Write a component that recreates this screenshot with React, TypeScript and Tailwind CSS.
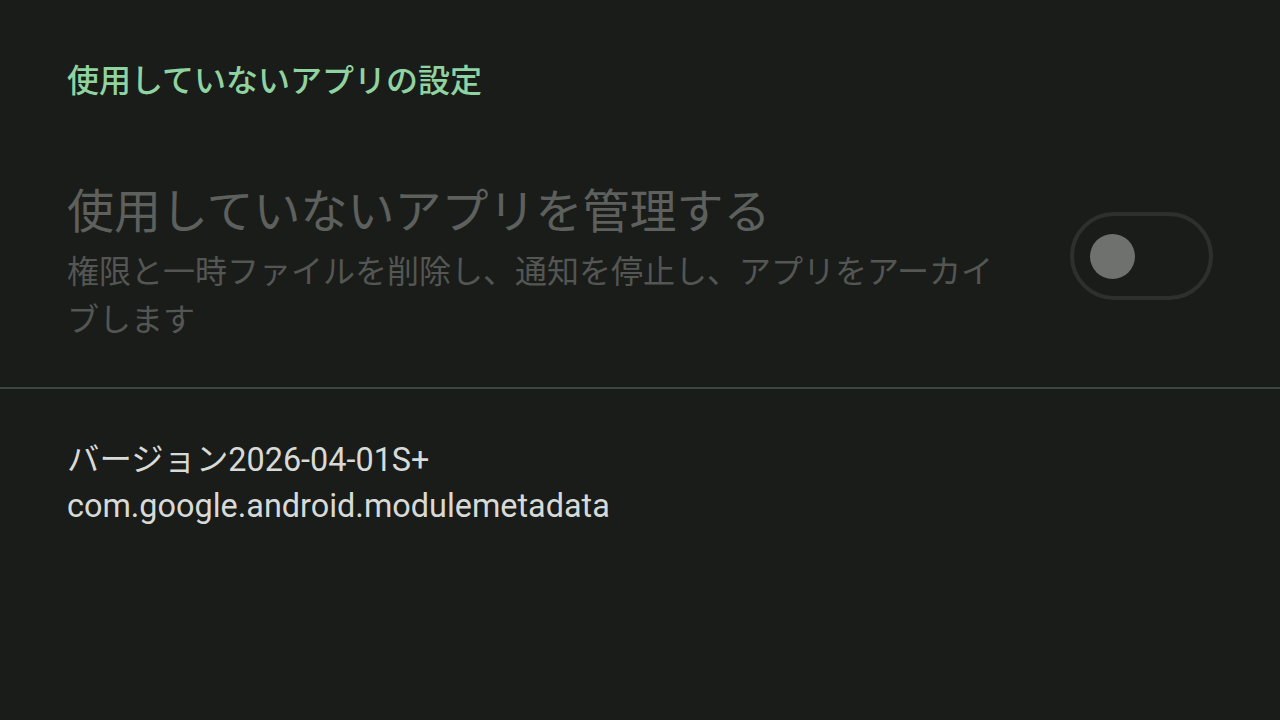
export default function App() {
  return (
    <div
      className="w-[1280px] h-[720px] bg-[#1a1c1a] overflow-hidden"
      style={{ fontFamily: 'Roboto, "Noto Sans CJK JP", sans-serif' }}
    >
      <div className="pl-[67px] pt-[58px] h-[140px]">
        <div className="text-[32px] leading-[46px] font-medium text-[#8fd3a0]">使用していないアプリの設定</div>
      </div>
      <div className="flex items-start justify-between pl-[67px] pr-[67px] h-[247px]">
        <div className="w-[940px] pt-[42px]">
          <div className="text-[47px] leading-[60px] text-[#5d605d]">使用していないアプリを管理する</div>
          <div className="text-[32px] leading-[48px] text-[#535653] mt-[6px]">
            権限と一時ファイルを削除し、通知を停止し、アプリをアーカイブします
          </div>
        </div>
        <div className="mt-[72px] w-[143px] h-[88px] rounded-full border-[4px] border-[#2d302d] flex items-center pl-[16px] shrink-0">
          <div className="w-[45px] h-[45px] rounded-full bg-[#6e716e]" />
        </div>
      </div>
      <div className="h-[2px] bg-[#3a4842]" />
      <div className="pl-[67px] pt-[48px]">
        <div className="text-[32.4px] leading-[46px] text-[#d8dad7]">バージョン2026-04-01S+</div>
        <div className="text-[32.4px] leading-[46px] text-[#d8dad7]">com.google.android.modulemetadata</div>
      </div>
    </div>
  );
}
